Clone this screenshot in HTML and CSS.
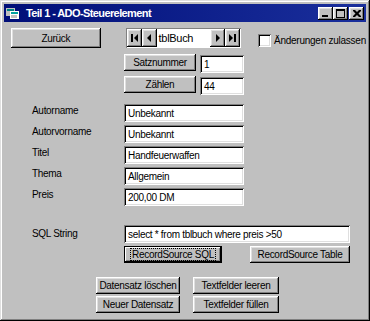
FILE: index.html
```html
<!DOCTYPE html>
<html lang="de">
<head>
  <meta charset="UTF-8">
  <title>Teil 1 - ADO-Steuerelement</title>
  <link rel="stylesheet" href="styles.css">
</head>
<body>
  <div class="window">
    <div class="titlebar">
      <svg class="app-icon" width="14" height="13" viewBox="0 0 14 13">
        <rect x="0" y="1" width="9" height="8" fill="#c0c0c0"/>
        <rect x="1" y="2" width="7" height="2" fill="#008080"/>
        <rect x="4" y="4" width="9" height="8" fill="#ffffff"/>
        <rect x="5" y="5" width="7" height="2" fill="#00a0a0"/>
        <rect x="5" y="8" width="6" height="3" fill="#c0c0c0"/>
      </svg>
      <span class="title">Teil 1 - ADO-Steuerelement</span>
      <div class="caption-buttons">
        <span class="cap">
          <svg width="8" height="8" viewBox="0 0 8 8"><rect x="0" y="6" width="6" height="2" fill="#000"/></svg>
        </span>
        <span class="cap">
          <svg width="9" height="9" viewBox="0 0 9 9"><rect x="0.5" y="0.5" width="8" height="8" fill="none" stroke="#000"/><rect x="0" y="0" width="9" height="2" fill="#000"/></svg>
        </span>
        <span class="cap cap-close">
          <svg width="8" height="7" viewBox="0 0 8 7"><path d="M0 0h2l2 2 2-2h2v1l-2.5 2.5 2.5 2.5v1h-2l-2-2-2 2h-2v-1l2.5-2.5-2.5-2.5z" fill="#000"/></svg>
        </span>
      </div>
    </div>

    <div class="client">
      <div class="top-row">
        <button class="btn btn-back">Zurück</button>
        <div class="navigator">
          <span class="nav-btn">
            <svg width="7" height="8" viewBox="0 0 7 8"><rect x="0" y="0" width="2" height="8" fill="#000"/><path d="M7 0v8l-4-4z" fill="#000"/></svg>
          </span>
          <span class="nav-btn">
            <svg width="5" height="8" viewBox="0 0 5 8"><path d="M4 0v8l-4-4z" fill="#000"/></svg>
          </span>
          <span class="nav-caption">tblBuch</span>
          <span class="nav-btn">
            <svg width="5" height="8" viewBox="0 0 5 8"><path d="M1 0v8l4-4z" fill="#000"/></svg>
          </span>
          <span class="nav-btn">
            <svg width="7" height="8" viewBox="0 0 7 8"><path d="M0 0v8l4-4z" fill="#000"/><rect x="5" y="0" width="2" height="8" fill="#000"/></svg>
          </span>
        </div>
        <div class="check">
          <span class="check-box"></span>
          <span class="check-label">Änderungen zulassen</span>
        </div>
      </div>

      <div class="count-row">
        <button class="btn btn-count">Satznummer</button>
        <div class="field field-small">1</div>
      </div>
      <div class="count-row count-row-second">
        <button class="btn btn-count">Zählen</button>
        <div class="field field-small">44</div>
      </div>

      <div class="fields">
        <span class="label">Autorname</span><div class="field">Unbekannt</div>
        <span class="label">Autorvorname</span><div class="field">Unbekannt</div>
        <span class="label">Titel</span><div class="field">Handfeuerwaffen</div>
        <span class="label">Thema</span><div class="field">Allgemein</div>
        <span class="label">Preis</span><div class="field">200,00 DM</div>
      </div>

      <div class="sql-row">
        <span class="label">SQL String</span>
        <div class="field field-wide">select * from tblbuch where preis &gt;50</div>
      </div>

      <div class="source-row">
        <button class="btn btn-sql btn-default"><span class="focus-rect">RecordSource SQL</span></button>
        <button class="btn btn-table">RecordSource Table</button>
      </div>

      <div class="actions">
        <button class="btn">Datensatz löschen</button>
        <button class="btn">Textfelder leeren</button>
        <button class="btn">Neuer Datensatz</button>
        <button class="btn">Textfelder füllen</button>
      </div>
    </div>
  </div>
</body>
</html>
```

FILE: styles.css
```css
body {
  margin: 0;
  background: #c0c0c0;
  font-family: 'Liberation Sans', Arial, sans-serif;
  font-size: 10px;
  letter-spacing: -0.3px;
  color: #000;
}
.window {
  width: 370px;
  height: 321px;
  box-sizing: border-box;
  padding: 4px;
  background: #c0c0c0;
  box-shadow: inset -1px -1px #000, inset 1px 1px #dfdfdf, inset -2px -2px #808080, inset 2px 2px #fff;
}
.titlebar {
  height: 18px;
  display: flex;
  align-items: center;
  padding: 0 2px;
  background: linear-gradient(to right, #000e78, #1a2f9c);
  color: #fff;
}
.app-icon {
  margin-right: 6px;
}
.title {
  font-weight: bold;
  font-size: 11px;
  letter-spacing: -0.6px;
}
.caption-buttons {
  margin-left: auto;
  display: flex;
}
.cap {
  width: 15px;
  height: 13px;
  display: flex;
  align-items: center;
  justify-content: center;
  background: #c0c0c0;
  box-shadow: inset -1px -1px #000, inset 1px 1px #fff, inset -2px -2px #808080, inset 2px 2px #dfdfdf;
}
.cap-close {
  margin-left: 1px;
}
.btn {
  font: inherit;
  letter-spacing: inherit;
  height: 17px;
  padding: 0;
  border: none;
  background: #c0c0c0;
  color: #000;
  white-space: nowrap;
  box-shadow: inset -1px -1px #000, inset 1px 1px #fff, inset -2px -2px #808080, inset 2px 2px #dfdfdf;
}
.top-row {
  display: flex;
  align-items: center;
  height: 20px;
  margin-top: 6px;
}
.btn-back {
  width: 90px;
  height: 20px;
  margin-left: 7px;
}
.navigator {
  display: flex;
  width: 116px;
  height: 20px;
  margin-left: 25px;
  box-sizing: border-box;
  padding: 1px;
  background: #c0c0c0;
  box-shadow: inset 1px 1px #808080, inset -1px -1px #fff;
}
.nav-btn {
  width: 15px;
  display: flex;
  align-items: center;
  justify-content: center;
  box-shadow: inset -1px -1px #000, inset 1px 1px #fff, inset -2px -2px #808080, inset 2px 2px #dfdfdf;
}
.nav-caption {
  flex: 1;
  background: #fff;
  padding-left: 2px;
  font-size: 11px;
  line-height: 18px;
}
.check {
  display: flex;
  align-items: center;
  margin-left: 17px;
  margin-top: 4px;
  white-space: nowrap;
}
.check-box {
  flex: none;
  width: 13px;
  height: 13px;
  margin-right: 3px;
  box-sizing: border-box;
  background: #fff;
  box-shadow: inset 1px 1px #808080, inset -1px -1px #fff, inset 2px 2px #000, inset -2px -2px #dfdfdf;
}
.check-label {
  letter-spacing: -0.25px;
}
.field {
  height: 18px;
  width: 120px;
  box-sizing: border-box;
  padding-left: 4px;
  line-height: 19px;
  background: #fff;
  white-space: nowrap;
  box-shadow: inset 1px 1px #808080, inset -1px -1px #fff, inset 2px 2px #000, inset -2px -2px #dfdfdf;
}
.count-row {
  display: flex;
  align-items: flex-start;
  padding-left: 120px;
  margin-top: 6px;
}
.count-row-second {
  margin-top: 3px;
}
.btn-count {
  width: 72px;
}
.field-small {
  width: 44px;
  margin-left: 4px;
  margin-top: 1px;
}
.fields {
  display: grid;
  grid-template-columns: 92px 120px;
  grid-auto-rows: 18px;
  row-gap: 3px;
  margin-top: 9px;
  padding-left: 28px;
}
.label {
  line-height: 14px;
}
.sql-row {
  display: grid;
  grid-template-columns: 92px 226px;
  margin-top: 19px;
  padding-left: 28px;
}
.sql-row .label {
  line-height: 18px;
}
.field-wide {
  width: 226px;
}
.source-row {
  display: flex;
  padding-left: 120px;
  margin-top: 3px;
}
.btn-sql {
  width: 98px;
}
.btn-default {
  box-shadow: inset 0 0 0 1px #000, inset -2px -2px #000, inset 2px 2px #fff, inset -3px -3px #808080;
}
.focus-rect {
  outline: 1px dotted #000;
  outline-offset: 0;
  padding: 0 1px;
}
.btn-table {
  width: 100px;
  margin-left: 28px;
}
.actions {
  display: grid;
  grid-template-columns: 84px 86px;
  grid-auto-rows: 17px;
  column-gap: 13px;
  row-gap: 2px;
  margin-top: 14px;
  padding-left: 92px;
}
```
